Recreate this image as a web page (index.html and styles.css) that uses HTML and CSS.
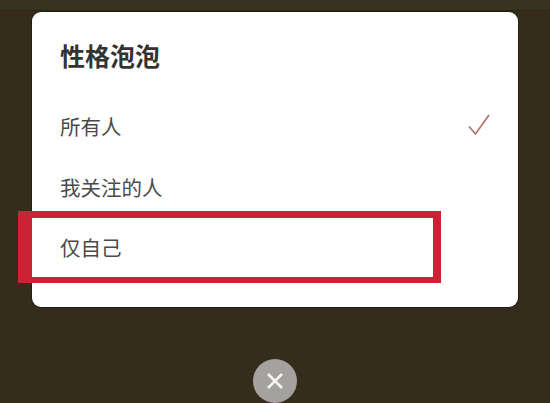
FILE: index.html
```html
<!DOCTYPE html>
<html lang="zh">
<head>
<meta charset="utf-8">
<title>性格泡泡</title>
<link rel="stylesheet" href="styles.css">
</head>
<body>
<div class="screen">
  <div class="top-strip"></div>
  <section class="card">
    <h1 class="title">性格泡泡</h1>
    <div class="row">
      <span>所有人</span>
      <svg class="check" viewBox="0 0 24 24" width="24" height="24"><path d="M2 13.500 L8.500 21 L22 2" fill="none" stroke="#b0716f" stroke-width="1.700"/></svg>
    </div>
    <div class="row"><span>我关注的人</span></div>
    <div class="row"><span>仅自己</span></div>
  </section>
  <div class="highlight"></div>
  <button class="close" aria-label="关闭">
    <svg viewBox="0 0 18 18" width="18" height="18"><path d="M2 2 L16 16 M16 2 L2 16" stroke="#f4f4f4" stroke-width="2.600" fill="none"/></svg>
  </button>
</div>
</body>
</html>
```
FILE: styles.css
```css
html, body { margin: 0; padding: 0; }
.screen {
  position: relative;
  width: 550px;
  height: 403px;
  overflow: hidden;
  box-sizing: border-box;
  padding: 12px 32px 0;
  background: #352c1c;
  font-family: "Noto Sans CJK SC", "Noto Sans", sans-serif;
}
.top-strip {
  position: absolute;
  left: 0; right: 0; top: 0;
  height: 11px;
  background: #38331f;
  border-bottom: 1px solid #2a2616;
  box-sizing: border-box;
}
.card {
  position: relative;
  box-sizing: border-box;
  height: 295px;
  padding: 24px 27px 0 28px;
  border-radius: 9px;
  background: #fff;
  box-shadow: 0 0 0 1px #241e12;
}
.title {
  margin: 0 0 22px;
  font-size: 25px;
  line-height: 38px;
  font-weight: 700;
  color: #333;
}
.row {
  display: flex;
  align-items: center;
  justify-content: space-between;
  height: 60.5px;
  font-size: 20.5px;
  color: #4a4a4a;
}
.check { display: block; margin-bottom: 2px; }
.highlight {
  position: absolute;
  left: 18px;
  top: 211px;
  width: 423px;
  height: 72px;
  box-sizing: border-box;
  border: solid #cb2336;
  border-width: 7px 8px 6px 14px;
}
.close {
  position: absolute;
  left: 253px;
  top: 359px;
  width: 44px;
  height: 44px;
  padding: 0;
  border: 0;
  border-radius: 50%;
  background: #a3a2a0;
  display: flex;
  align-items: center;
  justify-content: center;
}
```
